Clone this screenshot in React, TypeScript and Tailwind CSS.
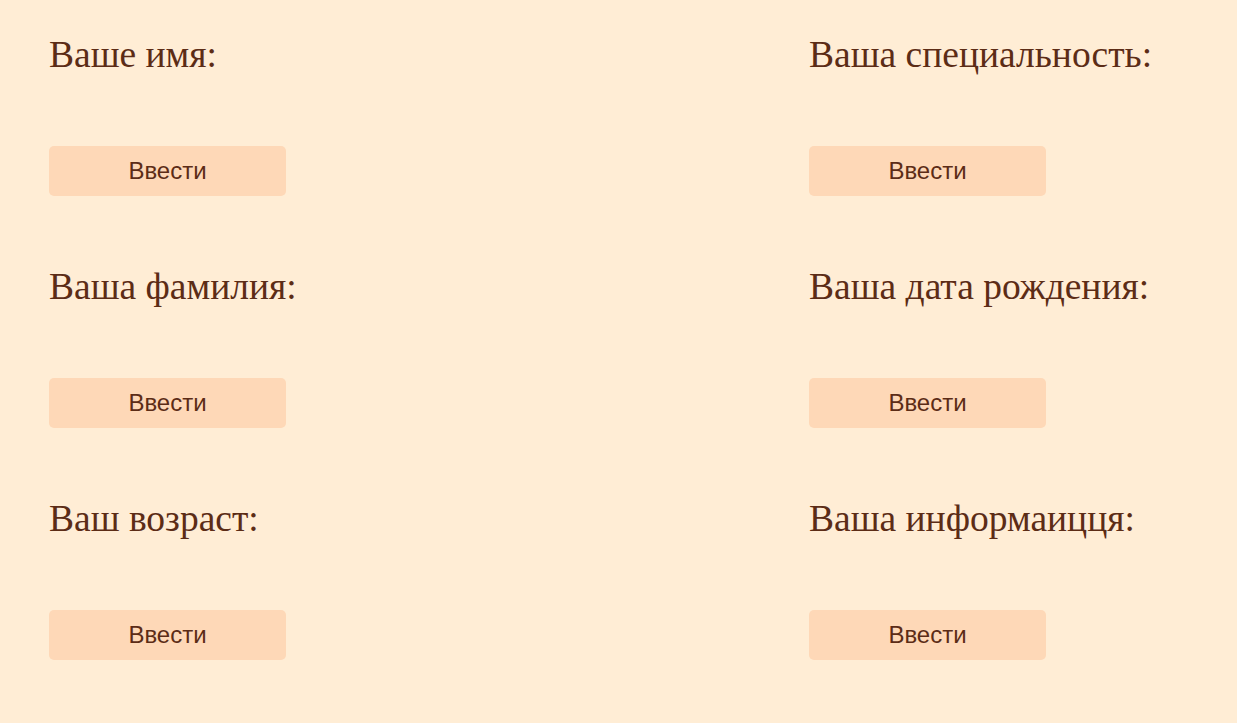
const fields = [
    ["Ваше имя:", "Ваша специальность:"],
    ["Ваша фамилия:", "Ваша дата рождения:"],
    ["Ваш возраст:", "Ваша информаицця:"],
]

function Field({ label }: { label: string }) {
    return (
        <div className="flex flex-col items-start">
            <h2 className="font-['Liberation_Serif',serif] text-[37.5px] leading-[44px] font-normal">
                {label}
            </h2>
            <button className="mt-[69px] w-[237px] h-[50px] rounded-[5px] bg-[#fed8b7] text-[24px] font-['Liberation_Sans',Arial,sans-serif] text-[#5c2c16]">
                Ввести
            </button>
        </div>
    )
}

export default function App() {
    return (
        <div className="min-h-[723px] bg-[#ffedd5] text-[#5c2c16] px-[49px] pt-[33px]">
            <div className="grid grid-cols-[760px_1fr] gap-y-[69px]">
                {fields.flat().map((f) => (
                    <Field key={f} label={f} />
                ))}
            </div>
        </div>
    )
}
